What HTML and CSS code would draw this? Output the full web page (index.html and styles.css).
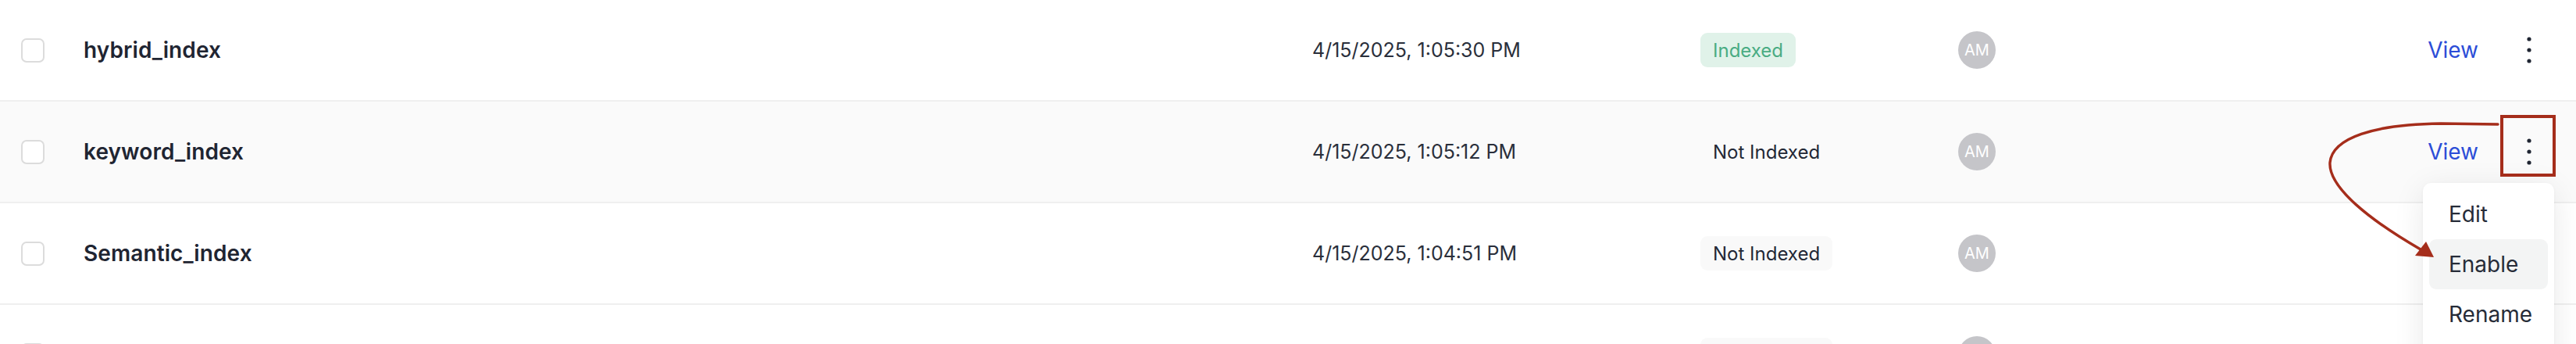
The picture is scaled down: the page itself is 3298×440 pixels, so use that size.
FILE: index.html
```html
<!DOCTYPE html>
<html lang="en">
<head>
<meta charset="utf-8">
<title>Indexes</title>
<link rel="stylesheet" href="styles.css">
</head>
<body>
<div class="page">
  <div class="table">
    <div class="row">
      <span class="cb"></span>
      <span class="name">hybrid_index</span>
      <span class="date">4/15/2025, 1:05:30 PM</span>
      <span class="status"><span class="badge ok">Indexed</span></span>
      <span class="owner"><span class="avatar">AM</span></span>
      <span class="actions">
        <a class="view">View</a>
        <span class="kebab-wrap">
          <span class="kebab"><svg width="6" height="34" viewBox="0 0 6 34"><circle cx="3" cy="3" r="2.6"/><circle cx="3" cy="17" r="2.6"/><circle cx="3" cy="31" r="2.6"/></svg></span>
        </span>
      </span>
    </div>
    <div class="row hover">
      <span class="cb"></span>
      <span class="name">keyword_index</span>
      <span class="date">4/15/2025, 1:05:12 PM</span>
      <span class="status"><span class="badge muted">Not Indexed</span></span>
      <span class="owner"><span class="avatar">AM</span></span>
      <span class="actions">
        <a class="view">View</a>
        <span class="kebab-wrap">
          <span class="kebab"><svg width="6" height="34" viewBox="0 0 6 34"><circle cx="3" cy="3" r="2.6"/><circle cx="3" cy="17" r="2.6"/><circle cx="3" cy="31" r="2.6"/></svg></span>
          <div class="menu">
            <div class="item">Edit</div>
            <div class="item active">Enable</div>
            <div class="item">Rename</div>
            <div class="item">Delete</div>
          </div>
        </span>
      </span>
    </div>
    <div class="row">
      <span class="cb"></span>
      <span class="name">Semantic_index</span>
      <span class="date">4/15/2025, 1:04:51 PM</span>
      <span class="status"><span class="badge muted">Not Indexed</span></span>
      <span class="owner"><span class="avatar">AM</span></span>
      <span class="actions">
        <a class="view">View</a>
        <span class="kebab-wrap">
          <span class="kebab"><svg width="6" height="34" viewBox="0 0 6 34"><circle cx="3" cy="3" r="2.6"/><circle cx="3" cy="17" r="2.6"/><circle cx="3" cy="31" r="2.6"/></svg></span>
        </span>
      </span>
    </div>
    <div class="row">
      <span class="cb"></span>
      <span class="name">vector_index</span>
      <span class="date">4/15/2025, 1:04:20 PM</span>
      <span class="status"><span class="badge muted">Not Indexed</span></span>
      <span class="owner"><span class="avatar">AM</span></span>
      <span class="actions">
        <a class="view">View</a>
        <span class="kebab-wrap">
          <span class="kebab"><svg width="6" height="34" viewBox="0 0 6 34"><circle cx="3" cy="3" r="2.6"/><circle cx="3" cy="17" r="2.6"/><circle cx="3" cy="31" r="2.6"/></svg></span>
        </span>
      </span>
    </div>
  </div>
  <svg class="annot" width="3298" height="440" viewBox="0 0 3298 440">
    <rect x="3203" y="149" width="67" height="75" fill="none" stroke="#a52d1b" stroke-width="4"/>
    <path d="M3198 159 L3125 158 C3040 159 2986 176 2983 208 C2981 240 3035 282 3099 319" fill="none" stroke="#a52d1b" stroke-width="3.4" stroke-linecap="round"/>
    <polygon points="3092,327 3106,309 3116,329" fill="#a52d1b"/>
  </svg>
</div>
</body>
</html>
```
FILE: styles.css
```css
* { box-sizing: border-box; }
html, body {
  margin: 0;
  padding: 0;
  background: #ffffff;
  overflow: hidden;
}
body {
  font-family: Inter, "Noto Sans", "Liberation Sans", sans-serif;
  color: #1f2532;
}
.page {
  position: relative;
  width: 3298px;
  height: 440px;
  overflow: hidden;
}
.row {
  display: grid;
  grid-template-columns: 80px 1573px 497px 330px 1fr auto;
  align-items: center;
  height: 130px;
  padding: 0 36px 0 27px;
  border-bottom: 2px solid #efefef;
  background: #ffffff;
}
.row.hover { background: #fafafa; position: relative; z-index: 2; }
.cb {
  width: 30px;
  height: 31px;
  border: 2px solid #dcdcdc;
  border-radius: 7px;
  background: #ffffff;
}
.name {
  font-size: 28px;
  font-weight: 600;
  color: #1f2532;
  letter-spacing: 0.1px;
}
.date {
  font-size: 25px;
  color: #2a2f3b;
  white-space: nowrap;
}
.status, .owner {
  display: flex;
  align-items: center;
}
.badge {
  display: inline-flex;
  align-items: center;
  height: 44px;
  padding: 0 16px;
  border-radius: 9px;
  font-size: 24px;
  white-space: nowrap;
}
.badge.ok { background: #e0f2e9; color: #4aac83; }
.badge.muted { background: #f9f9f9; color: #232836; }
.row.hover .badge.muted { background: #fafafa; }
.avatar {
  display: inline-flex;
  align-items: center;
  justify-content: center;
  width: 48px;
  height: 48px;
  border-radius: 50%;
  background: #c5c5c9;
  color: #ffffff;
  font-size: 20px;
}
.actions {
  display: flex;
  align-items: center;
  gap: 41px;
}
.view {
  font-size: 28px;
  color: #2c4dd7;
  text-decoration: none;
}
.kebab-wrap {
  position: relative;
  display: block;
}
.kebab {
  display: flex;
  align-items: center;
  justify-content: center;
  width: 48px;
  height: 48px;
}
.kebab svg { fill: #1f2532; }
.menu {
  position: absolute;
  top: calc(100% + 16px);
  right: -8px;
  width: 168px;
  padding: 8px;
  background: #ffffff;
  border-radius: 10px;
  box-shadow: 0 8px 40px rgba(0, 0, 0, 0.09), 0 1px 4px rgba(0, 0, 0, 0.04);
  z-index: 5;
}
.item {
  display: flex;
  align-items: center;
  height: 64px;
  padding: 0 25px;
  border-radius: 9px;
  font-size: 28px;
  color: #262c38;
}
.item.active { background: #f3f4f4; }
.annot {
  position: absolute;
  left: 0;
  top: 0;
  z-index: 10;
  pointer-events: none;
}
```
